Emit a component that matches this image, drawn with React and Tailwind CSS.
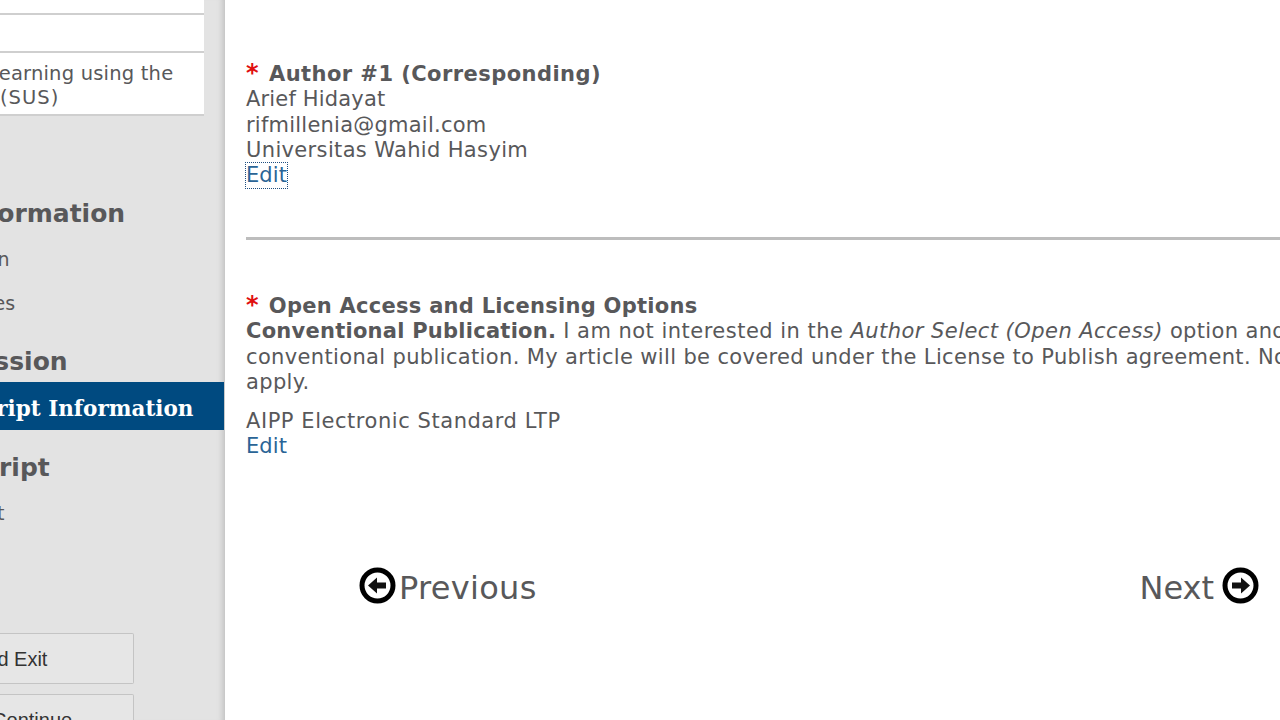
const ArrowIcon = ({ dir }) => (
  <svg width="37" height="37" viewBox="0 0 37 37" className="mb-[4px] shrink-0">
    <circle cx="18.5" cy="18.5" r="15.5" fill="#fff" stroke="#000" strokeWidth="5" />
    <path
      d={dir === "left" ? "M9 18.5 L18 10.5 V15.5 H27 V21.5 H18 V26.5 Z" : "M28 18.5 L19 10.5 V15.5 H10 V21.5 H19 V26.5 Z"}
      fill="#111"
    />
  </svg>
);

const Clip = ({ offset, className, children }) => (
  <div className={`shrink-0 whitespace-nowrap ${offset} ${className}`}>{children}</div>
);

export default function App() {
  return (
    <div className="flex h-[720px] w-[1280px] overflow-hidden bg-white font-['DejaVu_Sans',sans-serif] text-[#58585a]">
      <aside className="relative flex h-full w-[225px] shrink-0 flex-col overflow-hidden bg-[#e3e3e3] shadow-[inset_-8px_0_6px_-6px_#bdbdbd]">
        <div className="w-[204px] shrink-0 bg-white text-[19.5px] leading-[24px] tracking-[0.2px]">
          <div className="h-[15px] border-b-2 border-[#cfcfcf]" />
          <div className="h-[38px] border-b-2 border-[#cfcfcf]" />
          <div className="h-[63px] border-b-2 border-[#cfcfcf] pt-[9px]">
            <div className="-ml-[12px] whitespace-nowrap">Learning using the</div>
            <div className="whitespace-nowrap tracking-[1px]">(SUS)</div>
          </div>
        </div>
        <Clip offset="-ml-[142px] mt-[82px]" className="text-[25px] font-bold leading-[32px]">Article Information</Clip>
        <Clip offset="-ml-[61px] mt-[17px]" className="text-[19px] leading-[24px]">Section</Clip>
        <Clip offset="-ml-[44px] mt-[20px]" className="text-[19px] leading-[24px]">Issues</Clip>
        <Clip offset="-ml-[94px] mt-[31px]" className="text-[25px] font-bold leading-[32px]">Submission</Clip>
        <div className="mt-[4px] flex h-[48px] w-[224px] shrink-0 items-center whitespace-nowrap bg-[#004a80] pt-[6px] font-['DejaVu_Serif',serif] text-[21.5px] font-bold text-white">
          <span className="-ml-[98px]">Manuscript Information</span>
        </div>
        <Clip offset="-ml-[108px] mt-[22px]" className="text-[25px] font-bold leading-[32px]">Manuscript</Clip>
        <Clip offset="-ml-[34px] mt-[17px]" className="text-[19px] leading-[24px]">Text</Clip>
        <div className="mt-[108px] flex h-[51px] w-[134px] shrink-0 items-center rounded-r-[2px] border border-l-0 border-[#c4c4c4] bg-[#e6e6e6] font-['Liberation_Sans',sans-serif] text-[20px] text-[#333]">
          <span className="-ml-[76px] whitespace-nowrap">Save and Exit</span>
        </div>
        <div className="mt-[10px] flex h-[51px] w-[134px] shrink-0 items-start rounded-r-[2px] border border-l-0 border-[#c4c4c4] bg-[#e6e6e6] pt-[10px] font-['Liberation_Sans',sans-serif] text-[20px] text-[#333]">
          <span className="-ml-[98px] whitespace-nowrap">Save and Continue</span>
        </div>
      </aside>
      <main className="min-w-0 flex-1 overflow-hidden pl-[21px] text-[21px] leading-[25.4px] tracking-[0.35px]">
        <section className="pt-[62px]">
          <h2 className="font-bold tracking-[0.44px]"><span className="mr-[10px] text-[24px] leading-[0] text-[#e01010]">*</span>Author #1 (Corresponding)</h2>
          <div className="tracking-[0.17px]">Arief Hidayat</div>
          <div className="tracking-[0.23px]">rifmillenia@gmail.com</div>
          <div>Universitas Wahid Hasyim</div>
          <a className="-mt-px inline-block align-top tracking-[0.1px] text-[#2a6496] outline-1 outline-dotted outline-[#1f4f80]">Edit</a>
        </section>
        <hr className="mt-[48px] border-t-[3px] border-[#bdbdbd]" />
        <section className="mt-[54px]">
          <h2 className="font-bold tracking-[0.27px]"><span className="mr-[10px] text-[24px] leading-[0] text-[#e01010]">*</span>Open Access and Licensing Options</h2>
          <p className="w-[1200px] whitespace-nowrap">
            <b className="tracking-[0.25px]">Conventional Publication.</b> <span className="tracking-[0.48px]">I am not interested in the</span> <i className="tracking-[0.45px]">Author Select (Open Access)</i> option and wish to publish under the<br />
            conventional publication. My article will be covered under the License to Publish agreement. No fees<br />
            apply.
          </p>
          <div className="mt-[13px] tracking-[0.55px]">AIPP Electronic Standard LTP</div>
          <a className="tracking-[0.1px] text-[#2a6496]">Edit</a>
        </section>
        <nav className="mt-[108px] flex items-center justify-between pl-[113px] pr-[21px] text-[32px] leading-[40px] tracking-[0.3px]">
          <span className="flex items-center gap-[3px]"><ArrowIcon dir="left" />Previous</span>
          <span className="flex items-center gap-[8px] tracking-[0px]">Next<ArrowIcon dir="right" /></span>
        </nav>
      </main>
    </div>
  );
}
